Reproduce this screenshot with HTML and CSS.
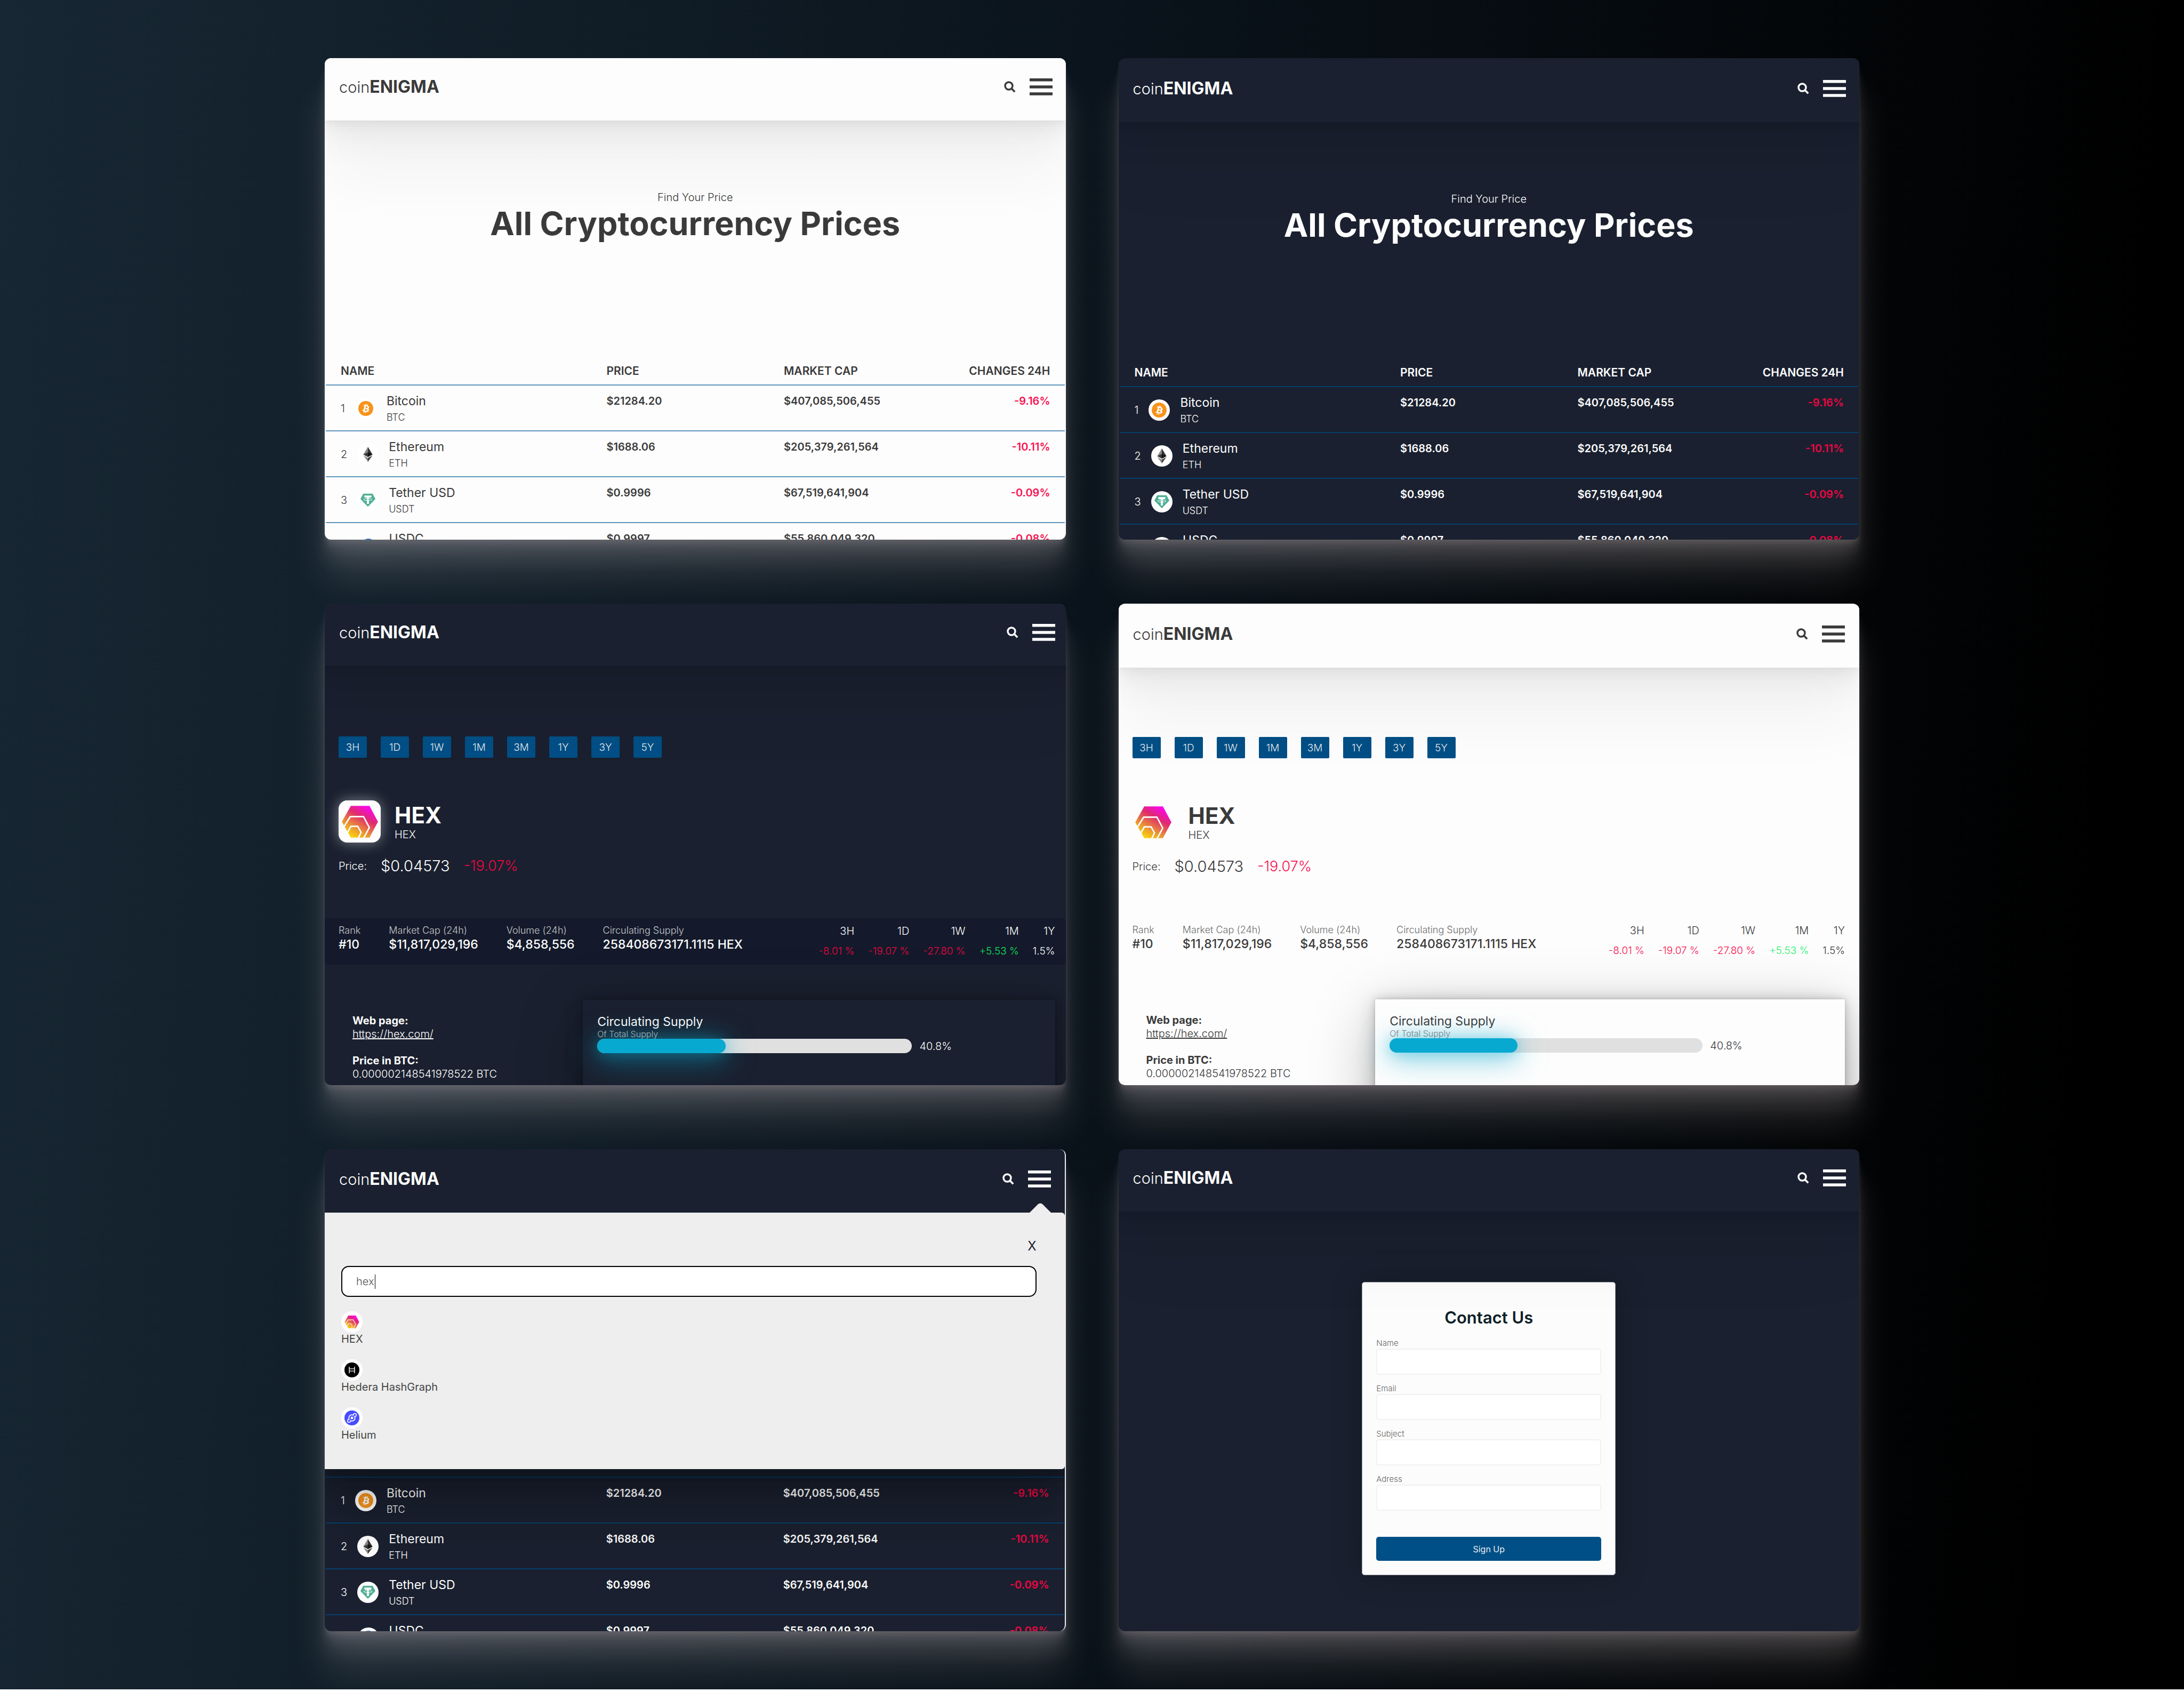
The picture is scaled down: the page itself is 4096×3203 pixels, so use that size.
FILE: index.html
```
<!DOCTYPE html>
<html lang="en">
<head>
<meta charset="utf-8">
<title>coinENIGMA</title>
<link rel="stylesheet" href="styles.css">
</head>
<body>
<svg class="sprite" width="0" height="0" aria-hidden="true">
  <defs>
    <linearGradient id="hex-fill" gradientUnits="userSpaceOnUse" x1="60" y1="215" x2="170" y2="25">
      <stop offset="0" stop-color="#ffe600"/>
      <stop offset="0.3" stop-color="#eb9a31"/>
      <stop offset="0.66" stop-color="#df2b6e"/>
      <stop offset="1" stop-color="#ff00ff"/>
    </linearGradient>
    <symbol id="i-search" viewBox="0 0 22 22">
      <circle cx="9" cy="9" r="7" fill="none" stroke="currentColor" stroke-width="3.4"/>
      <path d="M13.6 13.6 20.2 20.2" stroke="currentColor" stroke-width="3.6"/>
    </symbol>
    <symbol id="i-menu" viewBox="0 0 43 32">
      <path d="M0 0h43v5.5H0zM0 13.2h43v5.5H0zM0 26.3h43v5.5H0z" fill="currentColor"/>
    </symbol>
    <symbol id="i-btc" viewBox="0 0 32 32">
      <circle cx="16" cy="16" r="16" fill="#f7931a"/>
      <path fill="#fff" d="M23.189 14.02c.314-2.096-1.283-3.223-3.465-3.975l.708-2.84-1.728-.43-.69 2.765c-.454-.114-.92-.22-1.385-.326l.695-2.783L15.596 6l-.708 2.839c-.376-.086-.746-.17-1.104-.26l.002-.009-2.384-.595-.46 1.846s1.283.294 1.256.312c.7.175.826.638.805 1.006l-.806 3.235c.048.012.11.03.18.057l-.183-.045-1.13 4.532c-.086.212-.303.531-.793.41.018.025-1.256-.313-1.256-.313l-.858 1.978 2.25.561c.418.105.828.215 1.231.318l-.715 2.872 1.727.43.708-2.84c.472.127.93.245 1.378.357l-.706 2.828 1.728.43.715-2.866c2.948.558 5.164.333 6.097-2.333.752-2.146-.037-3.385-1.588-4.192 1.13-.26 1.98-1.003 2.207-2.538zm-3.95 5.538c-.533 2.147-4.148.986-5.32.695l.95-3.805c1.172.293 4.929.872 4.37 3.11zm.535-5.569c-.487 1.953-3.495.96-4.47.717l.86-3.45c.975.243 4.118.696 3.61 2.733z"/>
    </symbol>
    <symbol id="i-eth" viewBox="0 0 32 32">
      <path fill="#8a8a8a" d="M16 0v21.6L6.2 16.2z"/>
      <path fill="#343434" d="M16 0v21.6l9.8-5.4z"/>
      <path fill="#393939" d="M16 11.8v9.8l-9.8-5.4z"/>
      <path fill="#141414" d="M16 11.8v9.8l9.8-5.4z"/>
      <path fill="#8c8c8c" d="M16 23.6V32L6.2 18.2z"/>
      <path fill="#3c3c3b" d="M16 23.6V32l9.8-13.8z"/>
    </symbol>
    <symbol id="i-usdt" viewBox="0 0 32 32">
      <path fill="#50af95" d="M6 2h20l6 11.5L16 30 0 13.500z"/>
      <path fill="#fff" d="M8.500 6h15v4.200h-5.300V13h-4.400v-2.800H8.500z"/>
      <path fill="#fff" d="M13.800 14h4.400v10h-4.400z"/>
      <ellipse cx="16" cy="14.600" rx="9" ry="2.200" fill="none" stroke="#fff" stroke-width="1.100"/>
    </symbol>
    <symbol id="i-usdc" viewBox="0 0 32 32">
      <circle cx="16" cy="16" r="16" fill="#2775ca"/>
      <circle cx="16" cy="16" r="9.500" fill="none" stroke="#fff" stroke-width="2"/>
    </symbol>
    <symbol id="i-hex" viewBox="16 16 211 206">
      <path fill="url(#hex-fill)" d="M70 29H176L224 119 176 209H70L19 119z"/>
      <path fill="none" stroke="#fff" stroke-width="8" d="M31 147 67 90H142L175 152 142 213M51 181 70 145H109L128 179 112 213"/>
    </symbol>
    <symbol id="i-hedera" viewBox="0 0 32 32">
      <circle cx="16" cy="16" r="16" fill="#000"/>
      <path fill="none" stroke="#fff" stroke-width="1.600" d="M10.300 9v14M21.700 9v14M10.300 13.600h11.400M10.300 18.400h11.400"/>
    </symbol>
    <symbol id="i-helium" viewBox="0 0 32 32">
      <circle cx="16" cy="16" r="16" fill="#474dff"/>
      <circle cx="16" cy="16" r="6.600" fill="none" stroke="#fff" stroke-width="2"/>
      <circle cx="16" cy="16" r="2.800" fill="#fff"/>
      <circle cx="22.300" cy="9.700" r="3.200" fill="#474dff" stroke="#fff" stroke-width="1.700"/>
      <circle cx="9.700" cy="22.300" r="3.200" fill="#474dff" stroke="#fff" stroke-width="1.700"/>
      <path d="M19.400 12.600l1.400-1.400M12.600 19.400l-1.400 1.400" stroke="#474dff" stroke-width="2.600"/>
    </symbol>
  </defs>
</svg>

<main class="stage">

  <section class="screen screen--light">
    <header class="bar">
      <a class="logo" href="#">coin<b>ENIGMA</b></a>
      <button class="icon-btn" aria-label="Search"><svg class="ico-search"><use href="#i-search"/></svg></button>
      <button class="icon-btn" aria-label="Menu"><svg class="ico-menu"><use href="#i-menu"/></svg></button>
    </header>
    <div class="hero">
      <p class="hero-sub">Find Your Price</p>
      <h1 class="hero-title">All Cryptocurrency Prices</h1>
    </div>
    <table class="prices">
      <thead><tr><th class="c-name">NAME</th><th class="c-price">PRICE</th><th class="c-cap">MARKET CAP</th><th class="c-chg">CHANGES 24H</th></tr></thead>
      <tbody>
        <tr><td><div class="coin"><span>1</span><i class="disc"><svg><use href="#i-btc"/></svg></i><div class="coin-text"><div class="coin-name">Bitcoin</div><div class="coin-code">BTC</div></div></div></td><td>$21284.20</td><td>$407,085,506,455</td><td class="c-chg">-9.16%</td></tr>
        <tr><td><div class="coin"><span>2</span><i class="disc"><svg><use href="#i-eth"/></svg></i><div class="coin-text"><div class="coin-name">Ethereum</div><div class="coin-code">ETH</div></div></div></td><td>$1688.06</td><td>$205,379,261,564</td><td class="c-chg">-10.11%</td></tr>
        <tr><td><div class="coin"><span>3</span><i class="disc"><svg><use href="#i-usdt"/></svg></i><div class="coin-text"><div class="coin-name">Tether USD</div><div class="coin-code">USDT</div></div></div></td><td>$0.9996</td><td>$67,519,641,904</td><td class="c-chg">-0.09%</td></tr>
        <tr><td><div class="coin"><span>4</span><i class="disc"><svg><use href="#i-usdc"/></svg></i><div class="coin-text"><div class="coin-name">USDC</div><div class="coin-code">USDC</div></div></div></td><td>$0.9997</td><td>$55,860,049,320</td><td class="c-chg">-0.08%</td></tr>
      </tbody>
    </table>
  </section>

  <section class="screen screen--dark screen--low">
    <header class="bar">
      <a class="logo" href="#">coin<b>ENIGMA</b></a>
      <button class="icon-btn" aria-label="Search"><svg class="ico-search"><use href="#i-search"/></svg></button>
      <button class="icon-btn" aria-label="Menu"><svg class="ico-menu"><use href="#i-menu"/></svg></button>
    </header>
    <div class="hero">
      <p class="hero-sub">Find Your Price</p>
      <h1 class="hero-title">All Cryptocurrency Prices</h1>
    </div>
    <table class="prices">
      <thead><tr><th class="c-name">NAME</th><th class="c-price">PRICE</th><th class="c-cap">MARKET CAP</th><th class="c-chg">CHANGES 24H</th></tr></thead>
      <tbody>
        <tr><td><div class="coin"><span>1</span><i class="disc"><svg><use href="#i-btc"/></svg></i><div class="coin-text"><div class="coin-name">Bitcoin</div><div class="coin-code">BTC</div></div></div></td><td>$21284.20</td><td>$407,085,506,455</td><td class="c-chg">-9.16%</td></tr>
        <tr><td><div class="coin"><span>2</span><i class="disc"><svg><use href="#i-eth"/></svg></i><div class="coin-text"><div class="coin-name">Ethereum</div><div class="coin-code">ETH</div></div></div></td><td>$1688.06</td><td>$205,379,261,564</td><td class="c-chg">-10.11%</td></tr>
        <tr><td><div class="coin"><span>3</span><i class="disc"><svg><use href="#i-usdt"/></svg></i><div class="coin-text"><div class="coin-name">Tether USD</div><div class="coin-code">USDT</div></div></div></td><td>$0.9996</td><td>$67,519,641,904</td><td class="c-chg">-0.09%</td></tr>
        <tr><td><div class="coin"><span>4</span><i class="disc"><svg><use href="#i-usdc"/></svg></i><div class="coin-text"><div class="coin-name">USDC</div><div class="coin-code">USDC</div></div></div></td><td>$0.9997</td><td>$55,860,049,320</td><td class="c-chg">-0.08%</td></tr>
      </tbody>
    </table>
  </section>

  <section class="screen screen--dark screen--wide">
    <header class="bar">
      <a class="logo" href="#">coin<b>ENIGMA</b></a>
      <button class="icon-btn" aria-label="Search"><svg class="ico-search"><use href="#i-search"/></svg></button>
      <button class="icon-btn" aria-label="Menu"><svg class="ico-menu"><use href="#i-menu"/></svg></button>
    </header>
    <div class="ranges">
      <button>3H</button><button>1D</button><button>1W</button><button>1M</button><button>3M</button><button>1Y</button><button>3Y</button><button>5Y</button>
    </div>
    <div class="brand">
      <div class="brand-logo"><svg><use href="#i-hex"/></svg></div>
      <div><h2 class="brand-name">HEX</h2><p class="brand-code">HEX</p></div>
    </div>
    <div class="quote"><span class="quote-label">Price:</span><span>$0.04573</span><span class="quote-down">-19.07%</span></div>
    <div class="stats">
      <dl class="facts">
        <div><dt>Rank</dt><dd>#10</dd></div>
        <div><dt>Market Cap (24h)</dt><dd>$11,817,029,196</dd></div>
        <div><dt>Volume (24h)</dt><dd>$4,858,556</dd></div>
        <div><dt>Circulating Supply</dt><dd>258408673171.1115 HEX</dd></div>
      </dl>
      <dl class="moves">
        <div><dt>3H</dt><dd class="down">-8.01 %</dd></div>
        <div><dt>1D</dt><dd class="down">-19.07 %</dd></div>
        <div><dt>1W</dt><dd class="down">-27.80 %</dd></div>
        <div><dt>1M</dt><dd class="up">+5.53 %</dd></div>
        <div><dt>1Y</dt><dd>1.5%</dd></div>
      </dl>
    </div>
    <div class="details">
      <dl class="about">
        <div><dt>Web page:</dt><dd><a href="https://hex.com/">https://hex.com/</a></dd></div>
        <div><dt>Price in BTC:</dt><dd>0.000002148541978522 BTC</dd></div>
      </dl>
      <div class="supply">
        <h3 class="supply-title">Circulating Supply</h3>
        <p class="supply-sub">Of Total Supply</p>
        <div class="supply-row"><div class="track"><div class="fill" style="width:40.8%"></div></div><span>40.8%</span></div>
      </div>
    </div>
  </section>

  <section class="screen screen--light screen--low screen--narrow">
    <header class="bar">
      <a class="logo" href="#">coin<b>ENIGMA</b></a>
      <button class="icon-btn" aria-label="Search"><svg class="ico-search"><use href="#i-search"/></svg></button>
      <button class="icon-btn" aria-label="Menu"><svg class="ico-menu"><use href="#i-menu"/></svg></button>
    </header>
    <div class="ranges">
      <button>3H</button><button>1D</button><button>1W</button><button>1M</button><button>3M</button><button>1Y</button><button>3Y</button><button>5Y</button>
    </div>
    <div class="brand">
      <div class="brand-logo"><svg><use href="#i-hex"/></svg></div>
      <div><h2 class="brand-name">HEX</h2><p class="brand-code">HEX</p></div>
    </div>
    <div class="quote"><span class="quote-label">Price:</span><span>$0.04573</span><span class="quote-down">-19.07%</span></div>
    <div class="stats">
      <dl class="facts">
        <div><dt>Rank</dt><dd>#10</dd></div>
        <div><dt>Market Cap (24h)</dt><dd>$11,817,029,196</dd></div>
        <div><dt>Volume (24h)</dt><dd>$4,858,556</dd></div>
        <div><dt>Circulating Supply</dt><dd>258408673171.1115 HEX</dd></div>
      </dl>
      <dl class="moves">
        <div><dt>3H</dt><dd class="down">-8.01 %</dd></div>
        <div><dt>1D</dt><dd class="down">-19.07 %</dd></div>
        <div><dt>1W</dt><dd class="down">-27.80 %</dd></div>
        <div><dt>1M</dt><dd class="up">+5.53 %</dd></div>
        <div><dt>1Y</dt><dd>1.5%</dd></div>
      </dl>
    </div>
    <div class="details">
      <dl class="about">
        <div><dt>Web page:</dt><dd><a href="https://hex.com/">https://hex.com/</a></dd></div>
        <div><dt>Price in BTC:</dt><dd>0.000002148541978522 BTC</dd></div>
      </dl>
      <div class="supply">
        <h3 class="supply-title">Circulating Supply</h3>
        <p class="supply-sub">Of Total Supply</p>
        <div class="supply-row"><div class="track"><div class="fill" style="width:40.8%"></div></div><span>40.8%</span></div>
      </div>
    </div>
  </section>

  <section class="screen screen--dark screen--mid screen--scroll">
    <header class="bar">
      <a class="logo" href="#">coin<b>ENIGMA</b></a>
      <button class="icon-btn" aria-label="Search"><svg class="ico-search"><use href="#i-search"/></svg></button>
      <button class="icon-btn" aria-label="Menu"><svg class="ico-menu"><use href="#i-menu"/></svg></button>
      <div class="finder">
        <svg class="finder-tip" viewBox="0 0 40 18" aria-hidden="true"><path d="M0 18 16 2Q20-1 24 2L40 18z" fill="#eee"/></svg>
        <button class="finder-close" aria-label="Close">X</button>
        <div class="finder-field">
          <input id="finder-q" type="text" value="hex" aria-label="Search coins">
          <i class="caret"></i>
        </div>
        <ul class="finder-list">
          <li><i class="disc"><svg><use href="#i-hex"/></svg></i><a href="#">HEX</a></li>
          <li><i class="disc"><svg><use href="#i-hedera"/></svg></i><a href="#">Hedera HashGraph</a></li>
          <li><i class="disc"><svg><use href="#i-helium"/></svg></i><a href="#">Helium</a></li>
        </ul>
      </div>
    </header>
    <div class="hero"></div>
    <table class="prices">
      <thead><tr><th class="c-name"></th><th class="c-price"></th><th class="c-cap"></th><th class="c-chg"></th></tr></thead>
      <tbody>
        <tr><td><div class="coin"><span>1</span><i class="disc"><svg><use href="#i-btc"/></svg></i><div class="coin-text"><div class="coin-name">Bitcoin</div><div class="coin-code">BTC</div></div></div></td><td>$21284.20</td><td>$407,085,506,455</td><td class="c-chg">-9.16%</td></tr>
        <tr><td><div class="coin"><span>2</span><i class="disc"><svg><use href="#i-eth"/></svg></i><div class="coin-text"><div class="coin-name">Ethereum</div><div class="coin-code">ETH</div></div></div></td><td>$1688.06</td><td>$205,379,261,564</td><td class="c-chg">-10.11%</td></tr>
        <tr><td><div class="coin"><span>3</span><i class="disc"><svg><use href="#i-usdt"/></svg></i><div class="coin-text"><div class="coin-name">Tether USD</div><div class="coin-code">USDT</div></div></div></td><td>$0.9996</td><td>$67,519,641,904</td><td class="c-chg">-0.09%</td></tr>
        <tr><td><div class="coin"><span>4</span><i class="disc"><svg><use href="#i-usdc"/></svg></i><div class="coin-text"><div class="coin-name">USDC</div><div class="coin-code">USDC</div></div></div></td><td>$0.9997</td><td>$55,860,049,320</td><td class="c-chg">-0.08%</td></tr>
      </tbody>
    </table>
  </section>

  <section class="screen screen--dark">
    <header class="bar">
      <a class="logo" href="#">coin<b>ENIGMA</b></a>
      <button class="icon-btn" aria-label="Search"><svg class="ico-search"><use href="#i-search"/></svg></button>
      <button class="icon-btn" aria-label="Menu"><svg class="ico-menu"><use href="#i-menu"/></svg></button>
    </header>
    <form class="contact">
      <h2 class="contact-title">Contact Us</h2>
      <div class="field"><label for="f-name">Name</label><input id="f-name" type="text"></div>
      <div class="field"><label for="f-email">Email</label><input id="f-email" type="email"></div>
      <div class="field"><label for="f-subject">Subject</label><input id="f-subject" type="text"></div>
      <div class="field"><label for="f-adress">Adress</label><input id="f-adress" type="text"></div>
      <button class="submit" type="submit">Sign Up</button>
    </form>
  </section>

</main>
</body>
</html>
```
FILE: styles.css
```
* { box-sizing: border-box; margin: 0; padding: 0; }

body {
  background: #fff;
  font-family: Inter, "Liberation Sans", sans-serif;
  font-size: 20px;
  font-weight: 400;
}

button, input { font: inherit; color: inherit; border: 0; background: none; }
a { color: inherit; }
ul { list-style: none; }
svg { display: block; }
.sprite { position: absolute; }

.stage {
  display: grid;
  grid-template-columns: 1fr 1fr;
  gap: 120px 99px;
  padding: 109px 609px;
  overflow: hidden;
  background: linear-gradient(95deg, #172733 0%, #13212c 15%, #0a131b 49%, #04070a 76%, #000 93%);
}

/* ---- application window ---- */
.screen {
  --text: #3a3a3a;
  --page: #fdfdfd;
  --line: #5f97bf;
  --right: 25px;
  --down: #fa1150;
  --up: #2bf36f;
  position: relative;
  display: flex;
  flex-direction: column;
  aspect-ratio: 20 / 13;
  min-height: 0;
  overflow: hidden;
  border-radius: 12px;
  color: var(--text);
  background: var(--page);
  box-shadow:
    0 3px 2px rgba(255, 232, 234, .034),
    0 7px 5px rgba(255, 232, 234, .048),
    0 12px 10px rgba(255, 232, 234, .06),
    0 22px 18px rgba(255, 232, 234, .072),
    0 42px 33px rgba(255, 236, 236, .08),
    0 72px 70px rgba(255, 240, 240, .13);
}
.screen--dark {
  --text: #fdfdfd;
  --page: #1a202f;
  --line: #063f6b;
  --down: #ee0642;
  --up: #10e65c;
}
.screen--low { padding-top: 3px; }
.screen--mid { padding-top: 2px; }
.screen--wide { --right: 20px; }
.screen--narrow { --right: 27px; }
.screen--scroll { --right: 26px; border-right: 2px solid #eee; }

.bar {
  position: relative;
  z-index: 2;
  display: flex;
  align-items: center;
  flex: none;
  height: 117px;
  padding: 0 var(--right) 9px 27px;
  gap: 26px;
  background: var(--page);
  box-shadow:
    0 3px 3px rgba(0, 0, 0, .02),
    0 8px 8px rgba(0, 0, 0, .02),
    0 15px 15px rgba(0, 0, 0, .02),
    0 28px 28px rgba(0, 0, 0, .03),
    0 52px 52px rgba(0, 0, 0, .03),
    0 110px 110px rgba(0, 0, 0, .04);
}
.logo {
  flex: 1;
  font-size: 29px;
  font-weight: 300;
  line-height: 40px;
  text-decoration: none;
}
.logo b { font-size: 32px; font-weight: 700; }
.ico-search { width: 22px; height: 22px; }
.ico-menu { width: 43px; height: 32px; }

/* ---- price list ---- */
.hero {
  flex: none;
  height: 457px;
  padding-top: 129px;
  text-align: center;
}
.hero-sub { font-weight: 300; line-height: 30px; }
.hero-title { font-size: 61px; font-weight: 700; line-height: 68px; }

.prices {
  table-layout: fixed;
  border-collapse: collapse;
  width: calc(100% - 4px);
  margin: 0 2px;
}
.c-name { width: 38%; }
.c-price { width: 24%; }
.prices th {
  height: 39px;
  padding-bottom: 13px;
  border-bottom: 2px solid var(--line);
  font-size: 21px;
  font-weight: 600;
  line-height: 24px;
  text-align: left;
}
.prices td {
  height: 86px;
  padding-top: 14px;
  border-bottom: 2px solid var(--line);
  font-weight: 600;
  line-height: 30px;
  vertical-align: top;
}
.prices th:first-child { padding-left: 28px; }
.prices td:first-child { padding: 10px 0 8px 28px; }
.prices .c-chg { padding-right: 27px; text-align: right; }
.prices td.c-chg { color: var(--down); }

.coin {
  display: flex;
  align-items: center;
  gap: 19px;
  font-weight: 300;
}
.coin-text { padding-top: 3px; }
.coin-name { font-size: 23px; font-weight: 400; line-height: 32px; }
.coin-code { font-size: 18px; font-weight: 300; line-height: 30px; }
.disc {
  display: grid;
  place-items: center;
  width: 40px;
  height: 40px;
  border-radius: 50%;
  background: #fff;
}
.disc svg { width: 28px; height: 28px; }

/* ---- coin page ---- */
.ranges {
  display: flex;
  flex: none;
  gap: 26px;
  margin-top: 132px;
  padding-left: 26px;
}
.ranges button {
  width: 53px;
  height: 40px;
  border-radius: 2px;
  background: #004f86;
  color: #e4e8ec;
  font-size: 19px;
  font-weight: 300;
}
.screen--narrow .ranges { margin-top: 130px; }

.brand {
  display: flex;
  align-items: center;
  gap: 26px;
  margin-top: 80px;
  padding-left: 26px;
}
.brand-logo {
  display: grid;
  place-items: center;
  width: 79px;
  height: 79px;
  border-radius: 16px;
  background: #fdfdfd;
  box-shadow: 0 0 26px rgba(255, 255, 255, .45);
}
.brand-logo svg { width: 70px; height: 68px; }
.brand-name { font-size: 42px; font-weight: 700; line-height: 48px; }
.brand-code { font-weight: 300; line-height: 24px; }

.quote {
  display: flex;
  align-items: center;
  gap: 26px;
  margin-top: 24px;
  padding-left: 26px;
  font-size: 29px;
  font-weight: 300;
  line-height: 40px;
}
.quote-label { font-size: 20px; }
.quote-down { color: var(--down); font-size: 27px; }

.stats {
  display: flex;
  justify-content: space-between;
  flex: none;
  height: 87px;
  margin-top: 78px;
  padding: 10px var(--right) 10px 26px;
  border-radius: 6px;
}
.screen--dark .stats { background: #141a2b; }
.screen--narrow .stats { margin-top: 76px; }
.facts, .moves { display: flex; }
.facts { gap: 53px; }
.facts dt { font-size: 18px; font-weight: 300; line-height: 26px; opacity: .75; }
.facts dd { font-size: 23px; font-weight: 500; line-height: 26px; }
.moves { gap: 26px; text-align: right; font-weight: 300; line-height: 28px; }
.moves dd { margin-top: 10px; font-size: 19px; }
.down { color: var(--down); }
.up { color: var(--up); }

.details {
  display: grid;
  grid-template-columns: 35fr 64fr;
  flex: 1;
  padding: 66px var(--right) 0 0;
}
.about {
  display: flex;
  flex-direction: column;
  gap: 25px;
  padding: 27px 0 0 52px;
  line-height: 25px;
}
.about dt { font-weight: 700; }
.about dd { font-weight: 300; }
.supply {
  height: 260px;
  padding: 27px;
  background: var(--page);
  box-shadow:
    0 0 4px rgba(0, 0, 0, .12),
    0 0 14px rgba(0, 0, 0, .14),
    0 4px 34px rgba(0, 0, 0, .16),
    0 30px 120px rgba(0, 0, 0, .28);
}
.supply-title { font-size: 23px; font-weight: 400; line-height: 28px; }
.supply-sub { font-size: 16px; font-weight: 300; line-height: 18px; opacity: .6; }
.supply-row { display: flex; align-items: center; gap: 14px; font-weight: 300; }
.track {
  flex: 0 0 71%;
  height: 27px;
  border-radius: 14px;
  background: #e0e0e0;
}
.fill {
  height: 100%;
  border-radius: 14px;
  background: #08a9d0;
  box-shadow: 0 2px 24px rgba(8, 169, 208, .35), 0 8px 52px 4px rgba(8, 169, 208, .55);
}

/* ---- search drop-down ---- */
.finder {
  position: absolute;
  top: 100%;
  left: 0;
  right: 0;
  height: 481px;
  padding: 48px 53px 53px 31px;
  border-radius: 0 6px 6px 0;
  background: #eee;
  color: #444;
  box-shadow:
    0 15px 13px rgba(0, 0, 0, .08),
    0 28px 24px rgba(0, 0, 0, .08),
    0 52px 42px rgba(0, 0, 0, .1),
    0 110px 90px rgba(0, 0, 0, .12);
}
.finder-tip {
  position: absolute;
  right: 26px;
  bottom: 100%;
  width: 40px;
  height: 18px;
}
.finder-close {
  display: block;
  margin-left: auto;
  color: #1b2130;
  font-size: 24px;
  line-height: 30px;
}
.finder-field { position: relative; margin: 22px 0 27px; }
.finder-field input {
  display: block;
  width: 100%;
  height: 58px;
  padding: 0 26px;
  border: 2px solid #000;
  border-radius: 14px;
  background: #fff;
  color: #555;
  font-weight: 300;
}
.caret {
  position: absolute;
  top: 16px;
  left: 63px;
  width: 1px;
  height: 27px;
  background: #000;
}
.finder-list { display: grid; gap: 26px; line-height: 24px; }
.finder-list a { text-decoration: none; }

/* ---- contact form ---- */
.contact {
  width: 100%;
  max-width: 476px;
  margin: 132px auto 0;
  padding: 46px 26px 26px;
  border: 1px solid #9a9ba2;
  border-radius: 5px;
  background: #fcfcfc;
  color: #666;
  box-shadow: 0 0 60px rgba(0, 0, 0, .22);
}
.contact-title {
  margin-bottom: 18px;
  color: #0d2027;
  font-size: 31px;
  font-weight: 600;
  line-height: 40px;
  text-align: center;
}
.field { margin-bottom: 16px; font-size: 15px; font-weight: 300; }
.field label { display: block; line-height: 20px; }
.field input {
  display: block;
  width: 100%;
  height: 49px;
  padding: 0 12px;
  border: 2px solid #f1f1f1;
  border-radius: 5px;
  background: #fff;
}
.submit {
  display: block;
  width: 100%;
  height: 45px;
  margin-top: 49px;
  border-radius: 5px;
  background: #004f86;
  color: #e8edf2;
  font-size: 16px;
}
```
